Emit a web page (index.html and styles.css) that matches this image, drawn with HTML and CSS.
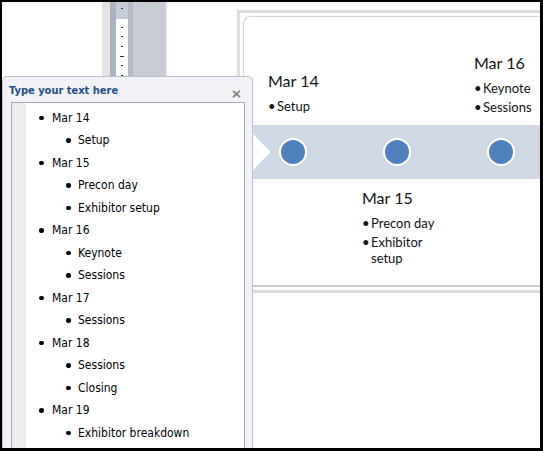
FILE: index.html
```html
<!DOCTYPE html>
<html lang="en">
<head>
<meta charset="utf-8">
<title>SmartArt timeline – text pane</title>
<link rel="stylesheet" href="styles.css">
</head>
<body>
<div class="screen">
  <div class="workspace">
    <div class="blank"></div>
    <div class="ruler">
      <div class="r-a"></div>
      <div class="r-b"></div>
      <div class="r-scale">
        <svg width="12" height="446" viewBox="0 0 12 446">
          <rect x="0" y="0" width="12" height="17" fill="#c5ccd8"/>
          <rect x="5" y="6" width="2" height="1" fill="#333"/>
          <rect x="5" y="25" width="2" height="1" fill="#333"/>
          <rect x="5" y="34" width="2" height="1" fill="#333"/>
          <rect x="5" y="44" width="2" height="1" fill="#333"/>
          <rect x="4" y="54" width="4" height="1" fill="#333"/>
          <rect x="5" y="63" width="2" height="1" fill="#333"/>
          <rect x="5" y="73" width="2" height="1" fill="#333"/>
        </svg>
      </div>
      <div class="r-c"></div>
      <div class="r-d"></div>
      <div class="r-e"></div>
    </div>
    <div class="gap"></div>
    <div class="slide-col">
      <div class="frame">
        <div class="slide">
          <div class="label label-14">
            <div class="lbl-title">Mar 14</div>
            <ul class="lbl-list">
              <li>Setup</li>
            </ul>
          </div>
          <div class="label label-16">
            <div class="lbl-title">Mar 16</div>
            <ul class="lbl-list">
              <li>Keynote</li>
              <li>Sessions</li>
            </ul>
          </div>
          <div class="band">
            <span class="dot"></span>
            <span class="dot"></span>
            <span class="dot"></span>
          </div>
          <div class="label label-15">
            <div class="lbl-title">Mar 15</div>
            <ul class="lbl-list">
              <li>Precon day</li>
              <li>Exhibitor setup</li>
            </ul>
          </div>
        </div>
      </div>
    </div>
  </div>

  <aside class="textpane">
    <div class="tp-head">
      <span class="tp-title">Type your text here</span>
      <svg class="tp-close" width="9" height="8" viewBox="0 0 9 8">
        <path d="M1 0.8 L8 7.2 M8 0.8 L1 7.2" stroke="#808080" stroke-width="1.8" fill="none"/>
      </svg>
    </div>
    <div class="tp-box">
      <div class="tp-gutter"></div>
      <ul class="tp-list">
        <li class="l1">Mar 14</li>
        <li class="l2">Setup</li>
        <li class="l1">Mar 15</li>
        <li class="l2">Precon day</li>
        <li class="l2">Exhibitor setup</li>
        <li class="l1">Mar 16</li>
        <li class="l2">Keynote</li>
        <li class="l2">Sessions</li>
        <li class="l1">Mar 17</li>
        <li class="l2">Sessions</li>
        <li class="l1">Mar 18</li>
        <li class="l2">Sessions</li>
        <li class="l2">Closing</li>
        <li class="l1">Mar 19</li>
        <li class="l2">Exhibitor breakdown</li>
      </ul>
    </div>
  </aside>
</div>
</body>
</html>
```

FILE: styles.css
```css
* { box-sizing: border-box; }

html, body {
  margin: 0;
  padding: 0;
  background: #000;
}

.screen {
  position: relative;
  width: 543px;
  height: 451px;
  border-style: solid;
  border-color: #000;
  border-width: 2px 3px 3px 2px;
  background: #fff;
  overflow: hidden;
}

.workspace {
  display: flex;
  height: 100%;
}

.blank { width: 100px; flex: none; }

.ruler {
  display: flex;
  flex: none;
  height: 100%;
}
.r-a { width: 8px; background: #e3e4e6; }
.r-b { width: 6px; background: #a9b2c0; }
.r-scale { width: 12px; background: #fff; }
.r-scale svg { display: block; }
.r-c { width: 5px; background: #b3bac5; }
.r-d { width: 32px; background: #c6cbd4; }
.r-e { width: 2px; background: #dcdcdc; }

.gap { width: 70px; flex: none; }

.slide-col {
  flex: 1;
  min-width: 0;
  padding-top: 8px;
}

.frame {
  height: 283px;
  border: 3px solid #dedede;
  border-right: none;
  padding: 3px 0 3px 3px;
  background: #fff;
}

.slide {
  position: relative;
  height: 100%;
  border: 1px solid #d6d6d6;
  border-right: none;
  border-bottom: 2px solid #cccccc;
  border-radius: 8px 0 0 8px;
  padding-top: 108px;
  overflow: hidden;
}

.band {
  height: 54px;
  background: #d0d8e6;
  clip-path: polygon(0 0, 100% 0, 100% 100%, 0 100%, 27px 50%);
  display: flex;
  align-items: center;
  gap: 76px;
  padding-left: 35px;
}

.dot {
  flex: none;
  width: 28px;
  height: 28px;
  border: 2px solid #fff;
  border-radius: 50%;
  background: #4f81bd;
}

.label {
  position: absolute;
  font-family: Lato, "Liberation Sans", sans-serif;
  font-weight: 400;
  color: #111;
}
.label-14 { left: 24px; top: 54px; width: 70px; }
.label-16 { left: 230px; top: 36px; width: 70px; }
.label-15 { left: 118px; top: 171px; width: 80px; }

.lbl-title {
  font-size: 16px;
  line-height: 20px;
}

.lbl-list {
  list-style: none;
  margin: 7px 0 0;
  padding: 0;
  font-size: 13px;
  line-height: 16px;
}
.lbl-list li {
  display: flex;
}
.lbl-list li + li { margin-top: 2.5px; }
.lbl-list li::before {
  content: "•";
  flex: none;
  width: 9px;
}

/* Text pane */
.textpane {
  position: absolute;
  left: 0;
  top: 74px;
  bottom: 0;
  width: 251px;
  display: flex;
  flex-direction: column;
  border: 1px solid #b7c0cc;
  border-bottom: none;
  border-radius: 5px 5px 0 0;
  background: #f0f2f6;
}

.tp-head {
  height: 25px;
  flex: none;
  display: flex;
  justify-content: space-between;
  align-items: flex-start;
  padding: 0 11px 0 6px;
}

.tp-title {
  margin-top: 6.5px;
  font-family: "DejaVu Sans Condensed", "DejaVu Sans", sans-serif;
  font-weight: bold;
  font-size: 11px;
  line-height: 14px;
  color: #1f4e87;
}

.tp-close {
  display: block;
  margin-top: 13px;
}

.tp-box {
  flex: 1;
  display: flex;
  margin: 0 7px 0 8px;
  border: 1px solid #a3abb5;
  border-bottom: none;
  background: #fff;
  overflow: hidden;
}

.tp-gutter {
  width: 14px;
  flex: none;
  background: #ececec;
}

.tp-list {
  list-style: none;
  margin: 0;
  padding: 3.5px 0 0;
  font-family: "DejaVu Sans Condensed", "DejaVu Sans", sans-serif;
  font-size: 12px;
  line-height: 22.5px;
  color: #000;
}

.tp-list li {
  display: flex;
  align-items: center;
  white-space: nowrap;
}

.tp-list li::before {
  content: "";
  flex: none;
  width: 4.5px;
  height: 4.5px;
  border-radius: 50%;
  background: #000;
}

.tp-list .l1::before { margin: 0 8.5px 0 13px; }
.tp-list .l2::before { margin: 0 7.5px 0 40px; }
```
